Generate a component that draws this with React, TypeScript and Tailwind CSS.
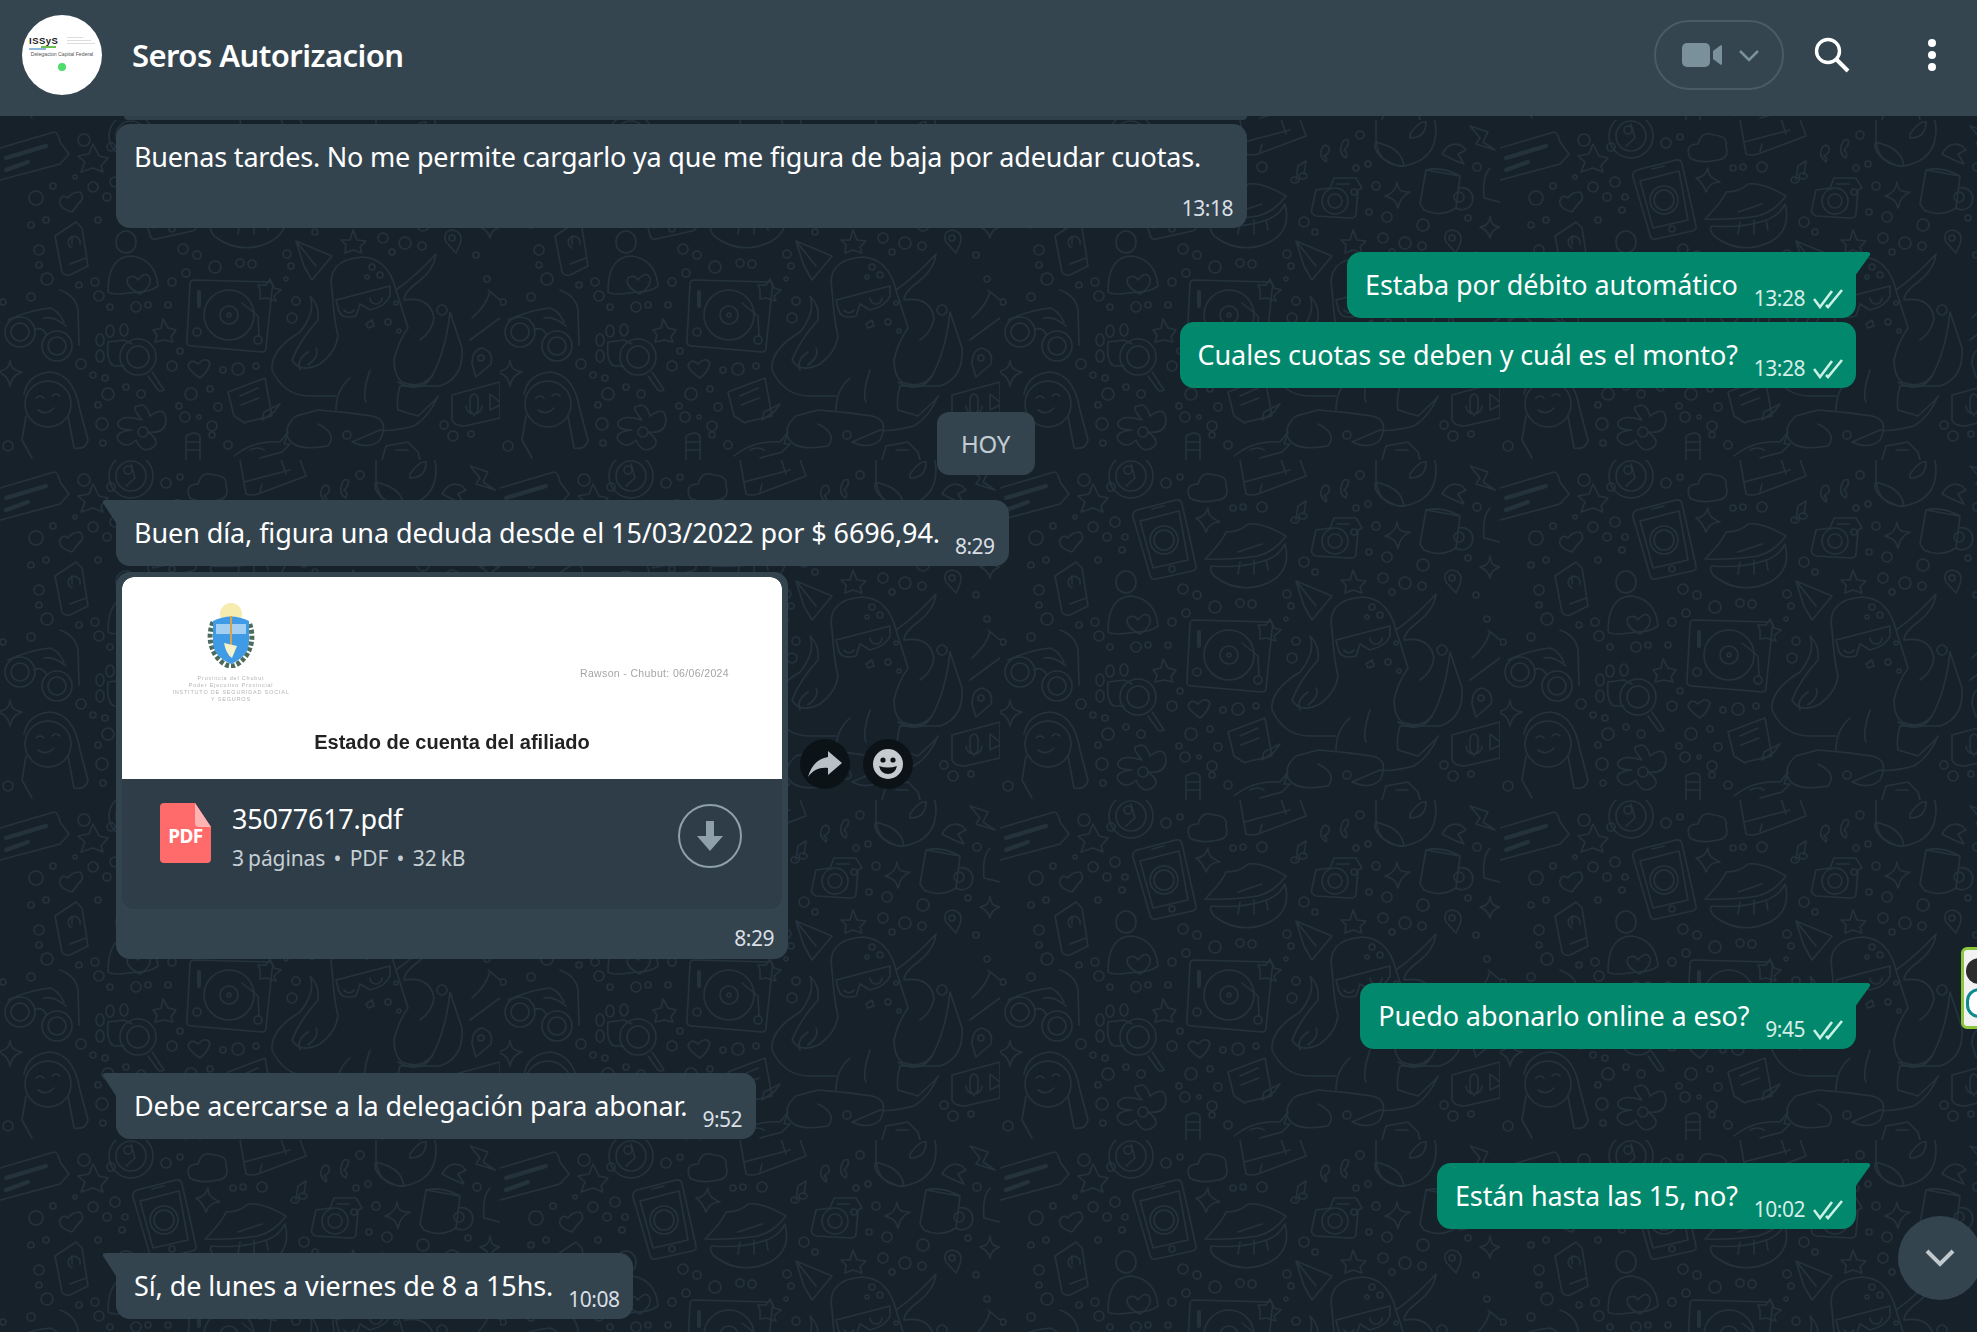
import React from "react";

const FONT = "font-['Noto_Sans','Open_Sans',sans-serif]";

const dots: Array<[number, number, number]> = [
  [166, 23, 5], [180, 17, 3], [36, 78, 7], [53, 66, 3], [75, 57, 2], [93, 67, 5], [115, 62, 5], [107, 77, 4], [125, 77, 3], [122, 90, 3], [31, 105, 3], [46, 100, 3], [98, 100, 3],
  [39, 130, 5], [39, 145, 3], [47, 159, 6], [79, 165, 3], [95, 162, 4], [99, 176, 5], [110, 187, 3], [136, 187, 5], [148, 185, 3], [168, 185, 3], [172, 162, 4], [186, 153, 4],
  [183, 129, 5], [197, 135, 4], [215, 147, 6], [240, 143, 4], [252, 144, 4], [233, 48, 3], [243, 47, 3], [262, 47, 5], [304, 102, 5], [315, 112, 3], [287, 134, 4], [291, 146, 3],
  [286, 159, 2], [296, 181, 4], [292, 198, 5], [360, 15, 4], [356, 48, 3], [368, 44, 3], [376, 66, 4], [369, 92, 3], [387, 97, 5], [383, 118, 5], [405, 123, 6], [422, 126, 4], [392, 132, 3],
  [423, 105, 6], [468, 98, 3], [476, 135, 3], [477, 47, 4], [442, 190, 5], [487, 159, 3], [3, 182, 3], [31, 177, 4], [81, 244, 5], [93, 255, 3], [105, 258, 3], [126, 267, 3], [108, 274, 6],
  [141, 274, 4], [98, 285, 3], [102, 304, 6], [103, 323, 3], [172, 246, 5], [180, 231, 3], [223, 250, 3], [238, 249, 6], [256, 246, 3], [191, 274, 6], [210, 269, 3], [179, 286, 3], [218, 287, 4],
  [185, 297, 5], [199, 297, 2], [212, 306, 5], [212, 315, 3], [228, 325, 4], [347, 315, 4], [444, 305, 4], [453, 316, 5], [471, 314, 3], [8, 326, 5], [128, 10, 4], [111, 27, 4], [84, 20, 6],
];

function ChatPattern() {
  return (
    <svg className="absolute left-0 top-0 h-[1332px] w-[1977px]" viewBox="0 0 1977 1332">
      <defs>
        <pattern id="wa" patternUnits="userSpaceOnUse" x="1000" y="460" width="500" height="340">
          <g fill="none" stroke="#24323c" strokeWidth="1.6" strokeLinecap="round" strokeLinejoin="round">
            {dots.map(([x, y, r], i) => <circle key={i} cx={x} cy={y} r={r} />)}
            {/* speech card */}
            <path d="M0 28 L54 12 Q58 12 60 22 L69 34 L60 44 L0 60" />
            <path d="M6 38 L46 26 M6 50 L28 42" strokeWidth="4" />
            {/* star */}
            <path d="M93 24 L99 36 L108 38 L101 46 L103 52 L93 48 L81 52 L85 42 L78 36 L89 34 Z" />
            {/* clock */}
            <circle cx="131" cy="16" r="22" /><circle cx="131" cy="16" r="15" /><path d="M131 4 L135 18 L126 26" />
            {/* cloud */}
            <path d="M190 38 Q184 24 198 24 Q202 10 214 15 Q228 16 226 26 Q230 38 218 40 Q200 44 190 38 Z" />
            {/* book / parcel */}
            <path d="M240 0 L246 34 Q250 36 258 34 L306 16 L298 -6 M244 22 L290 10 M262 24 L260 32 M286 14 L280 -4" />
            {/* quotes */}
            <path d="M322 28 Q318 36 326 42 Q328 38 324 36 Q332 32 328 26 Q324 24 322 28 Z M342 24 Q338 34 346 38 Q348 32 344 30 Q350 24 348 20 Q344 18 342 24 Z" />
            {/* music note */}
            <path d="M296 60 L298 46 L306 41 L304 54 M291 60 a4 3 0 1 0 8 0 a4 3 0 1 0 -8 0 M299 56 a4 3 0 1 0 8 0 a4 3 0 1 0 -8 0" />
            {/* sparkle */}
            <path d="M208 48 C208 56 212 58 220 62 C212 62 208 66 206 72 C204 66 202 62 196 58 C202 58 206 54 208 48 Z" />
            {/* phone */}
            <path d="M137 50 L176 40 Q181 39 182 44 L196 106 Q197 110 192 111 L156 119 Q151 120 150 115 L133 57 Q132 52 137 50 Z" />
            <path d="M140 61 L179 51 L188 100 L153 108 Z" /><circle cx="164" cy="80" r="14" /><circle cx="164" cy="80" r="10" /><circle cx="172" cy="109" r="3" /><path d="M152 49 L164 46" />
            {/* lips */}
            <path d="M205 99 Q222 82 226 72 Q240 72 248 64 Q262 62 286 76 Q274 92 258 96 Q230 100 205 99 Z" />
            <path d="M285 84 Q292 110 270 122 Q240 136 214 116 Q208 108 212 106 Q240 108 260 102 Q278 98 285 84 Z" />
            <path d="M238 92 Q250 88 262 84 M240 102 L238 114 M254 100 L254 114 M266 100 L268 110" />
            {/* camera */}
            <path d="M316 70 L330 68 L334 58 L356 58 L362 68 L358 70 L356 94 Q356 98 350 98 L316 96 Q310 94 312 88 Z" />
            <circle cx="335" cy="81" r="13" /><circle cx="335" cy="81" r="7" /><circle cx="354" cy="72" r="3" /><path d="M337 64 H349" />
            {/* sparkle 2 */}
            <path d="M397 62 C398 70 400 72 410 72 C402 76 400 80 398 88 C396 80 392 78 385 76 C392 74 396 70 397 62 Z" />
            {/* cup */}
            <path d="M426 50 L460 56 L456 88 Q440 98 424 90 L420 84 Z M426 50 Q442 46 460 56 M459 68 a11 11 0 1 1 -3 20" /><circle cx="459" cy="77" r="5" />
            {/* bolt */}
            <path d="M470 6 L488 12 L483 22 L495 30 L476 24 L480 18 Z" />
            {/* sparkle 3 */}
            <path d="M490 96 C491 104 493 106 500 107 C493 110 491 112 490 118 C488 112 486 110 480 107 C486 106 489 104 490 96 Z" />
            {/* pins */}
            <path d="M452 110 Q464 112 460 124 L456 133 L446 122 Q442 112 452 110 Z" /><circle cx="452" cy="118" r="3" />
            <path d="M482 228 Q494 232 491 244 L476 257 L472 244 Q472 230 482 228 Z" /><circle cx="481" cy="238" r="3" />
            {/* bell arc */}
            <path d="M490 48 Q482 56 484 78 L500 82" />
            {/* planet */}
            <path d="M376 0 V20 Q378 46 404 46 Q436 40 436 10 Q436 -2 430 -6 M376 22 Q372 28 382 38 Q398 48 404 46 Q402 32 388 26 Q382 24 376 22 Z M410 14 Q420 0 426 2 Q426 18 410 18 Z" />
            <path d="M442 34 Q450 20 462 26 L466 30 L458 34 L464 44 L454 40 Z" />
            {/* star 2 */}
            <path d="M353 110 L357 120 L366 121 L360 127 L362 133 L353 130 L345 133 L346 125 L341 120 L350 120 Z" />
            {/* plane */}
            <path d="M296 121 L332 136 L312 160 L304 146 Z M296 121 L316 146" />
            {/* person + heart */}
            <path d="M116 122 a10 11 0 1 1 20 0 Q136 132 126 133 Q116 132 116 122 Z" />
            <path d="M108 172 Q108 136 132 136 Q156 140 158 166 Q150 172 138 172 L120 174 Q110 174 108 172 Z" />
            <path d="M140 174 Q124 166 128 158 Q134 154 138 160 Q146 150 150 158 Q152 166 140 174 Z" />
            {/* card */}
            <path d="M55 116 L76 102 L82 108 L88 146 L70 155 Q64 156 62 152 Z M72 128 a6 6 0 1 1 8 -4 M72 124 L72 116 M70 144 L86 138" />
            {/* glasses with arm */}
            <path d="M60 170 Q76 176 78 190 L79 225" />
            <path d="M8 200 Q30 190 50 188 Q58 190 64 202 M66 206 Q54 196 44 198" />
            <circle cx="20" cy="212" r="15" /><circle cx="20" cy="212" r="9" /><circle cx="57" cy="226" r="15" /><circle cx="57" cy="226" r="9" /><path d="M34 210 Q42 206 46 214" />
            {/* paw + magnifier */}
            <path d="M108 222 L124 220 L132 224 M108 222 Q106 242 114 246 L124 246" />
            <ellipse cx="110" cy="211" rx="4" ry="6" /><ellipse cx="124" cy="210" rx="4" ry="6" /><ellipse cx="100" cy="220" rx="4" ry="6" /><ellipse cx="100" cy="236" rx="4" ry="6" />
            <circle cx="138" cy="237" r="18" /><circle cx="138" cy="237" r="11" /><path d="M152 252 L164 270 Q160 272 158 270 L148 256" />
            {/* turntable */}
            <path d="M194 160 L270 162 Q274 162 272 170 L266 228 Q266 232 262 232 L192 226 Q186 226 187 220 L190 164 Q190 160 194 160 Z" />
            <circle cx="229" cy="195" r="25" /><circle cx="229" cy="195" r="9" /><circle cx="229" cy="195" r="2" /><path d="M242 183 L258 196 L259 216" /><circle cx="258" cy="220" r="4" /><circle cx="197" cy="212" r="4" /><path d="M199 172 V186" strokeWidth="4" />
            <path d="M270 159 L274 168 L281 170 L274 176 L276 181 L266 178 L260 179 L260 170 L258 165 L266 165 Z" />
            {/* octopus */}
            <path d="M332 170 Q326 140 362 137 Q388 138 396 170 L408 208 Q398 222 394 240 Q394 256 402 262 Q420 270 432 256 Q446 230 450 192 Q456 210 462 228 Q464 258 440 266 L400 266 Q396 280 398 290 L418 296 Q440 276 438 276 Q430 296 414 306 Q390 312 380 310 L352 322 Q370 330 380 320 Q390 300 372 296 Q346 292 318 290 L296 296 Q284 306 288 318 Q296 332 328 326 Q338 314 318 304" />
            <path d="M332 170 Q334 200 338 216 Q336 232 320 244 Q300 254 292 240 Q300 220 318 200 Q320 186 310 176 Q316 192 300 212 Q270 230 272 250 Q284 276 310 276 Q330 276 336 276" />
            <path d="M396 170 Q416 156 436 134 Q434 150 418 162 Q404 172 404 180 Q430 176 434 198 Q432 212 420 220" />
            <path d="M350 258 Q336 270 336 290 M370 250 Q362 274 366 282" />
            <path d="M336 180 L390 166 L390 176 Q386 186 370 190 L360 184 L356 196 Q340 200 338 188 Z" /><path d="M344 190 a6 6 0 0 0 10 0 M370 178 a6 6 0 0 0 12 0" />
            <circle cx="372" cy="147" r="3" /><circle cx="380" cy="155" r="3" /><circle cx="367" cy="157" r="2" /><path d="M366 204 L372 200 L374 206 L368 208 Z" /><circle cx="388" cy="202" r="3" /><circle cx="399" cy="211" r="2" /><circle cx="396" cy="183" r="2" />
            <path d="M398 262 Q420 275 432 256 M308 245 Q320 236 316 228 M300 250 Q296 240 308 232" />
            {/* video card */}
            <path d="M452 275 L500 262 V298 L465 306 Q454 306 452 300 Z M470 280 a4 6 0 0 1 8 0 V288 a4 6 0 0 1 -8 0 Z M466 286 a8 8 0 0 0 16 0 M474 294 V296 M490 274 L502 284 L490 290 Z" />
            {/* hair flip */}
            <path d="M470 220 L500 198 M488 170 L500 180 M472 198 Q486 186 490 172" />
            {/* heart */}
            <path d="M72 92 Q58 88 60 80 Q62 74 68 78 Q72 72 80 72 Q86 78 78 84 Z" />
            <path d="M200 258 Q188 250 188 245 Q192 238 198 244 Q206 236 210 243 Q208 252 200 258 Z" />
            {/* star 3 */}
            <path d="M163 199 L168 208 L176 210 L171 217 L173 222 L164 220 L155 222 L157 215 L153 210 L161 208 Z" />
            {/* sparkle 4 */}
            <path d="M10 240 C11 248 13 250 22 252 C14 255 12 258 10 266 C8 258 6 255 -2 252 C6 250 9 248 10 240 Z" />
            {/* chat */}
            <path d="M228 272 L265 258 L272 296 L246 302 L245 303 L234 296 Z M240 276 L258 268 M241 285 L259 278" />
            <path d="M264 292 L280 284 L274 292 L262 300 Z" />
            {/* girl */}
            <circle cx="48" cy="284" r="23" /><path d="M24 274 Q28 254 50 252 Q74 254 80 290 L88 320 Q86 330 74 328 L68 296 M26 296 L22 320 L32 338" />
            <path d="M36 278 Q40 274 44 278 M52 276 Q56 272 60 276 M38 290 Q46 296 54 288" />
            {/* flower */}
            <path d="M142 300 Q130 286 138 286 Q146 282 150 296 Q166 284 166 302 Q164 314 148 312 Q162 322 152 328 Q142 334 136 320 Q126 330 118 320 Q114 312 132 310 Q116 310 118 302 Q124 294 142 300 Z" />
            <circle cx="143" cy="312" r="5" />
            {/* fish */}
            <path d="M234 336 Q254 320 280 322 L288 312 L284 324 L290 324 L282 332 L260 338" /><path d="M250 330 Q258 326 264 330" />
            <path d="M186 340 V316 Q196 310 200 316 L200 340 M186 322 H200 M186 330 H200" />
            <path d="M382 340 L386 326 L408 322 L418 332 L420 340 M396 330 H408" />
          </g>
        </pattern>
      </defs>
      <rect width="1977" height="1332" fill="url(#wa)" />
    </svg>
  );
}

function Ticks() {
  return (
    <svg width="30" height="20" viewBox="0 0 30 20" fill="none" stroke="#c9f0e5" strokeWidth="2.6" className="ml-[8px] mb-[3px] shrink-0">
      <path d="M1 10 L7 18 L19 2" />
      <path d="M13 16 L15 18 L29 1" />
    </svg>
  );
}

function TailRight() {
  return (
    <svg width="16" height="24" viewBox="0 0 16 24" className="absolute -right-[15px] top-0">
      <path d="M0 0 H12 Q16 0 15 3 L0 24 Z" fill="#02886c" />
    </svg>
  );
}

function TailLeft() {
  return (
    <svg width="16" height="26" viewBox="0 0 16 26" className="absolute -left-[14px] top-0">
      <path d="M16 0 H4 Q0 0 1 3 L16 26 Z" fill="#33444f" />
    </svg>
  );
}

function Outgoing({ text, time, tail = true, className = "" }: { text: string; time: string; tail?: boolean; className?: string }) {
  return (
    <div className={`flex justify-end ${className}`}>
      <div className={`relative flex h-[66px] items-center rounded-b-[14px] rounded-tl-[14px] bg-[#02886c] pl-[18px] pr-[13px] ${tail ? "" : "rounded-tr-[14px]"}`}>
        {tail && <TailRight />}
        <span className="text-[27px] leading-[36px] tracking-[-0.1px] text-white">{text}</span>
        <span className="ml-[16px] flex items-end self-end pb-[6px]">
          <span className="text-[21px] leading-[28px] tracking-[-0.5px] text-[#d5eee7]">{time}</span>
          <Ticks />
        </span>
      </div>
    </div>
  );
}

function Incoming({ text, time, className = "" }: { text: string; time: string; className?: string }) {
  return (
    <div className={`flex justify-start ${className}`}>
      <div className="relative flex h-[66px] items-center rounded-b-[14px] rounded-tr-[14px] bg-[#33444f] pl-[18px] pr-[14px]">
        <TailLeft />
        <span className="text-[27px] leading-[36px] tracking-[-0.1px] text-white">{text}</span>
        <span className="ml-[15px] self-end pb-[6px] text-[21px] leading-[28px] tracking-[-0.5px] text-[#d9dfe3]">{time}</span>
      </div>
    </div>
  );
}

function Crest() {
  return (
    <svg width="54" height="66" viewBox="0 0 54 66" className="blur-[0.5px]">
      <circle cx="27" cy="12" r="11" fill="#f6ecb0" />
      <path d="M9 20 Q2 38 12 54 Q20 64 27 64 Q34 64 42 54 Q52 38 45 20" fill="none" stroke="#4c6b5a" strokeWidth="5" strokeDasharray="4 2" />
      <path d="M9 19 Q27 10 45 19 V40 Q45 54 27 62 Q9 54 9 40 Z" fill="#3f9be6" />
      <rect x="12" y="22" width="30" height="10" fill="#cfe6f7" opacity="0.7" />
      <rect x="26" y="14" width="2" height="32" fill="#d8a24a" />
      <path d="M20 41 L33 44 L28 56 Q22 52 20 41 Z" fill="#f5f2c9" />
    </svg>
  );
}

function Avatar() {
  return (
    <div className="flex h-[80px] w-[80px] shrink-0 flex-col items-center overflow-hidden rounded-full bg-white pt-[21px]">
      <div className="flex w-[66px] items-start justify-between">
        <div className="flex flex-col">
          <span className="font-['Liberation_Sans',sans-serif] text-[9.5px] font-bold leading-[10px] tracking-[0.5px] text-[#222]">ISSyS</span>
          <div className="ml-[12px] h-[2px] w-[15px] bg-[#6bbf4a]" />
          <div className="h-[2px] w-[17px] bg-[#8db7e0]" />
        </div>
        <div className="mt-[1px] flex flex-col gap-[2px]">
          <div className="h-[1px] w-[16px] bg-[#ddd]" />
          <div className="h-[1px] w-[24px] bg-[#ddd]" />
          <div className="h-[1px] w-[28px] bg-[#ddd]" />
        </div>
      </div>
      <span className="mt-[1px] whitespace-nowrap font-['Liberation_Sans',sans-serif] text-[5.2px] leading-[7px] text-[#555]">Delegacion Capital Federal</span>
      <div className="mt-[5px] h-[8px] w-[8px] rounded-full bg-[#4fdc6a]" />
    </div>
  );
}

export default function App() {
  return (
    <div className={`relative flex h-[1332px] w-[1977px] flex-col overflow-hidden bg-[#16212a] ${FONT}`}>
      <ChatPattern />
      <header className="relative z-10 flex h-[116px] shrink-0 items-center bg-[#34454f] pb-[7px] pl-[22px]">
        <Avatar />
        <h1 className="ml-[30px] mt-[2px] text-[31px] font-semibold tracking-[-0.55px] text-white">Seros Autorizacion</h1>
        <div className="ml-auto flex items-center">
          <div className="flex h-[70px] w-[130px] items-center rounded-full border-2 border-[#4a5b65] pl-[26px]">
            <svg width="40" height="24" viewBox="0 0 40 24">
              <rect width="28" height="24" rx="5" fill="#7a919c" />
              <path d="M31 8 L39 2 Q40 2 40 4 V20 Q40 22 39 22 L31 16 Z" fill="#7a919c" />
            </svg>
            <svg width="20" height="12" viewBox="0 0 20 12" fill="none" stroke="#7a919c" strokeWidth="2.6" className="ml-[17px] mt-[2px]">
              <path d="M1 1 L10 10 L19 1" />
            </svg>
          </div>
          <svg width="36" height="36" viewBox="0 0 36 36" fill="none" stroke="#fff" strokeWidth="3.4" className="ml-[30px]">
            <circle cx="14" cy="14" r="11.5" />
            <path d="M22 22 L34 34" strokeWidth="4" />
          </svg>
          <div className="ml-[78px] mr-[41px] flex flex-col gap-[4px]">
            <div className="h-[8px] w-[8px] rounded-full bg-white" />
            <div className="h-[8px] w-[8px] rounded-full bg-white" />
            <div className="h-[8px] w-[8px] rounded-full bg-white" />
          </div>
        </div>
      </header>

      <main className="relative flex min-h-0 flex-1 flex-col pl-[116px] pr-[121px]">
        <div className="ml-[8px] h-[4px] w-[1123px] rounded-b-[6px] bg-[#2f3f49]" />
        <div className="mt-[4px] flex justify-start">
          <div className="flex h-[104px] w-[1131px] flex-col rounded-[14px] bg-[#33444f] pl-[18px] pr-[14px] pt-[15px]">
            <span className="text-[27px] leading-[36px] tracking-[-0.2px] text-white">Buenas tardes. No me permite cargarlo ya que me figura de baja por adeudar cuotas.</span>
            <span className="mt-auto self-end pb-[6px] text-[21px] leading-[28px] tracking-[-0.5px] text-[#d9dfe3]">13:18</span>
          </div>
        </div>

        <Outgoing className="mt-[24px]" text="Estaba por débito automático" time="13:28" />
        <Outgoing className="mt-[4px]" tail={false} text="Cuales cuotas se deben y cuál es el monto?" time="13:28" />

        <div className="mt-[24px] flex justify-center pr-[1px]">
          <div className="flex h-[63px] w-[98px] items-center justify-center rounded-[12px] bg-[#33444f] text-[24px] tracking-[-0.3px] text-[#c3ccd2]">HOY</div>
        </div>

        <Incoming className="mt-[25px]" text="Buen día, figura una deduda desde el 15/03/2022 por $ 6696,94." time="8:29" />

        <div className="mt-[6px] flex items-center">
          <div className="flex h-[387px] w-[672px] flex-col rounded-[14px] bg-[#33444f] px-[6px] pt-[5px]">
            <div className="flex h-[332px] flex-col overflow-hidden rounded-[12px] bg-[#2e3d47]">
              <div className="flex h-[202px] shrink-0 flex-col rounded-t-[12px] bg-white">
                <div className="flex">
                  <div className="ml-[24px] mt-[25px] flex w-[170px] flex-col items-center">
                    <Crest />
                    <div className="mt-[7px] flex flex-col items-center font-['Liberation_Sans',sans-serif] text-[5.5px] leading-[7px] tracking-[0.8px] text-[#b5b5b5] blur-[0.3px]">
                      <span>Provincia del Chubut</span>
                      <span>Poder Ejecutivo Provincial</span>
                      <span>INSTITUTO DE SEGURIDAD SOCIAL</span>
                      <span>Y SEGUROS</span>
                    </div>
                  </div>
                  <span className="ml-[264px] mt-[89px] font-['Liberation_Sans',sans-serif] text-[10.5px] leading-[14px] tracking-[0.35px] text-[#a5a5a5] blur-[0.3px]">Rawson - Chubut: 06/06/2024</span>
                </div>
                <div className="mt-[27px] text-center font-['Liberation_Sans',sans-serif] text-[20px] font-bold leading-[24px] text-[#222] blur-[0.3px]">Estado de cuenta del afiliado</div>
              </div>
              <div className="flex flex-1 items-start pl-[38px] pr-[40px] pt-[24px]">
                <svg width="51" height="60" viewBox="0 0 51 60" className="shrink-0">
                  <path d="M4 0 H35 L51 24 V56 Q51 60 47 60 H4 Q0 60 0 56 V4 Q0 0 4 0 Z" fill="#ff6b6b" />
                  <path d="M35 0 L51 24 H39 Q35 24 35 20 Z" fill="#ffb3b3" />
                </svg>
                <div className="-ml-[47px] mt-[22px] w-[43px] shrink-0 text-center text-[19px] font-bold leading-[22px] tracking-[-0.6px] text-white">PDF</div>
                <div className="ml-[25px] -mt-[4px] flex flex-col">
                  <span className="text-[27px] leading-[40px] tracking-[-0.25px] text-white">35077617.pdf</span>
                  <span className="mt-[5px] whitespace-pre text-[21px] leading-[28px] tracking-[-0.1px] text-[#c6cfd5] [word-spacing:-1.2px]">{"3 páginas  •  PDF  •  32 kB"}</span>
                </div>
                <div className="ml-auto mt-[1px] flex h-[64px] w-[64px] shrink-0 items-center justify-center rounded-full border-2 border-[#8fa0aa]">
                  <svg width="26" height="30" viewBox="0 0 26 30">
                    <path d="M9 0 H17 V15 H26 L13 30 L0 15 H9 Z" fill="#8fa0aa" />
                  </svg>
                </div>
              </div>
            </div>
            <div className="mt-auto self-end pb-[7px] pr-[8px] text-[21px] leading-[28px] tracking-[-0.5px] text-[#d9dfe3]">8:29</div>
          </div>
          <div className="ml-[12px] flex gap-[13px] pb-[4px]">
            <div className="flex h-[50px] w-[50px] items-center justify-center rounded-full bg-[#0c1317]">
              <svg width="34" height="26" viewBox="0 0 34 26">
                <path d="M20 0 L34 12 L20 24 V17 C12 16 5 19 0 26 C3 15 9 8 20 6 Z" fill="#b9c1c6" />
              </svg>
            </div>
            <div className="flex h-[50px] w-[50px] items-center justify-center rounded-full bg-[#0c1317]">
              <svg width="30" height="30" viewBox="0 0 30 30">
                <circle cx="15" cy="15" r="15" fill="#c5cbcf" />
                <circle cx="10" cy="11" r="2.6" fill="#0c1317" />
                <circle cx="20" cy="11" r="2.6" fill="#0c1317" />
                <path d="M6 17 Q15 20 24 17 Q22 25 15 25 Q8 25 6 17 Z" fill="#0c1317" />
              </svg>
            </div>
          </div>
        </div>

        <Outgoing className="mt-[24px]" text="Puedo abonarlo online a eso?" time="9:45" />
        <Incoming className="mt-[24px]" text="Debe acercarse a la delegación para abonar." time="9:52" />
        <Outgoing className="mt-[24px]" text="Están hasta las 15, no?" time="10:02" />
        <Incoming className="mt-[24px]" text="Sí, de lunes a viernes de 8 a 15hs." time="10:08" />

        <div className="absolute right-[-5px] top-[1100px] flex h-[84px] w-[84px] items-center justify-center rounded-full bg-[#33444f]">
          <svg width="30" height="18" viewBox="0 0 30 18" fill="none" stroke="#c0c9ce" strokeWidth="4">
            <path d="M2 2 L15 15 L28 2" />
          </svg>
        </div>
        <div className="absolute right-[-10px] top-[831px] flex h-[82px] w-[26px] flex-col items-start gap-[4px] rounded-[6px] border-[3px] border-[#8cc63f] bg-[#f2f2f2] pl-[2px] pt-[8px]">
          <div className="h-[26px] w-[26px] rounded-full bg-[#2b2b2b]" />
          <div className="h-[30px] w-[26px] rounded-full border-[3px] border-[#0e8a8f] bg-white" />
        </div>
      </main>
    </div>
  );
}
